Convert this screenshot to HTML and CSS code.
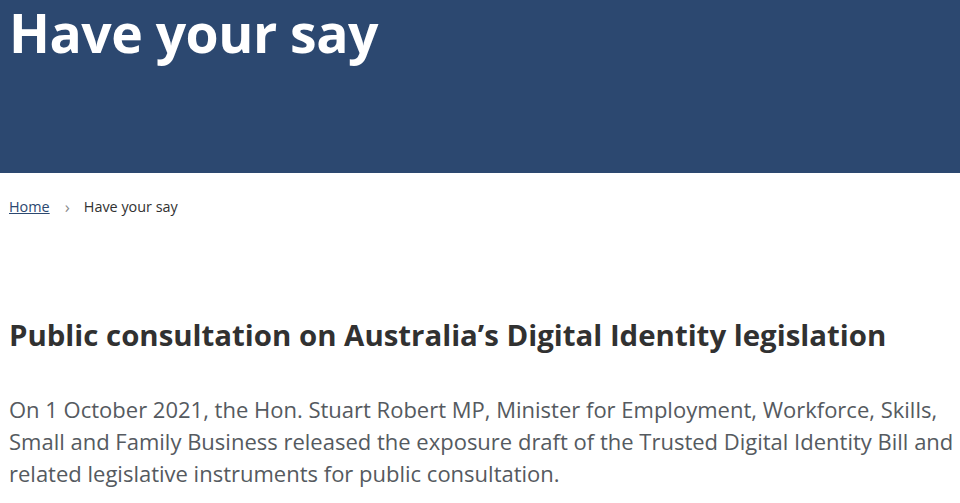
FILE: index.html
```html
<!DOCTYPE html>
<html lang="en">
<head>
<meta charset="utf-8">
<title>Have your say</title>
<link rel="stylesheet" href="styles.css">
</head>
<body>
<header class="banner">
  <h1 class="banner-title">Have your say</h1>
</header>
<nav class="breadcrumb">
  <a class="crumb-link" href="#">Home</a>
  <span class="crumb-sep">&#8250;</span>
  <span class="crumb-current">Have your say</span>
</nav>
<main class="content">
  <h2 class="content-title">Public consultation on Australia’s Digital Identity legislation</h2>
  <p class="content-text">On 1 October 2021, the Hon. Stuart Robert MP, Minister for Employment, Workforce, Skills, Small and Family Business released the exposure draft of the Trusted Digital Identity Bill and related legislative instruments for public consultation.</p>
</main>
</body>
</html>
```
FILE: styles.css
```css
html, body {
  margin: 0;
  padding: 0;
  background: #ffffff;
}
body {
  font-family: "Open Sans", "Noto Sans", sans-serif;
  color: #313131;
}
.banner {
  background: #2c4870;
  height: 173px;
  padding: 0 9px;
  box-sizing: border-box;
}
.banner-title {
  margin: 0;
  color: #ffffff;
  font-weight: 700;
  font-size: 53.5px;
  line-height: 66px;
  letter-spacing: -0.5px;
}
.breadcrumb {
  display: flex;
  align-items: center;
  gap: 14px;
  padding: 24px 9px 0;
  font-size: 14.4px;
  line-height: 20px;
}
.crumb-link {
  color: #2c4870;
  text-decoration: underline;
}
.crumb-sep {
  color: #8a8a8a;
  font-size: 17px;
  margin-left: 1px;
}
.crumb-current {
  color: #313131;
}
.content {
  padding: 100px 2px 0 9px;
}
.content-title {
  margin: 0;
  font-size: 29.4px;
  line-height: 36px;
  font-weight: 700;
  color: #313131;
}
.content-text {
  margin: 40px 0 0;
  font-size: 22px;
  line-height: 32px;
  color: #555a60;
}
```
